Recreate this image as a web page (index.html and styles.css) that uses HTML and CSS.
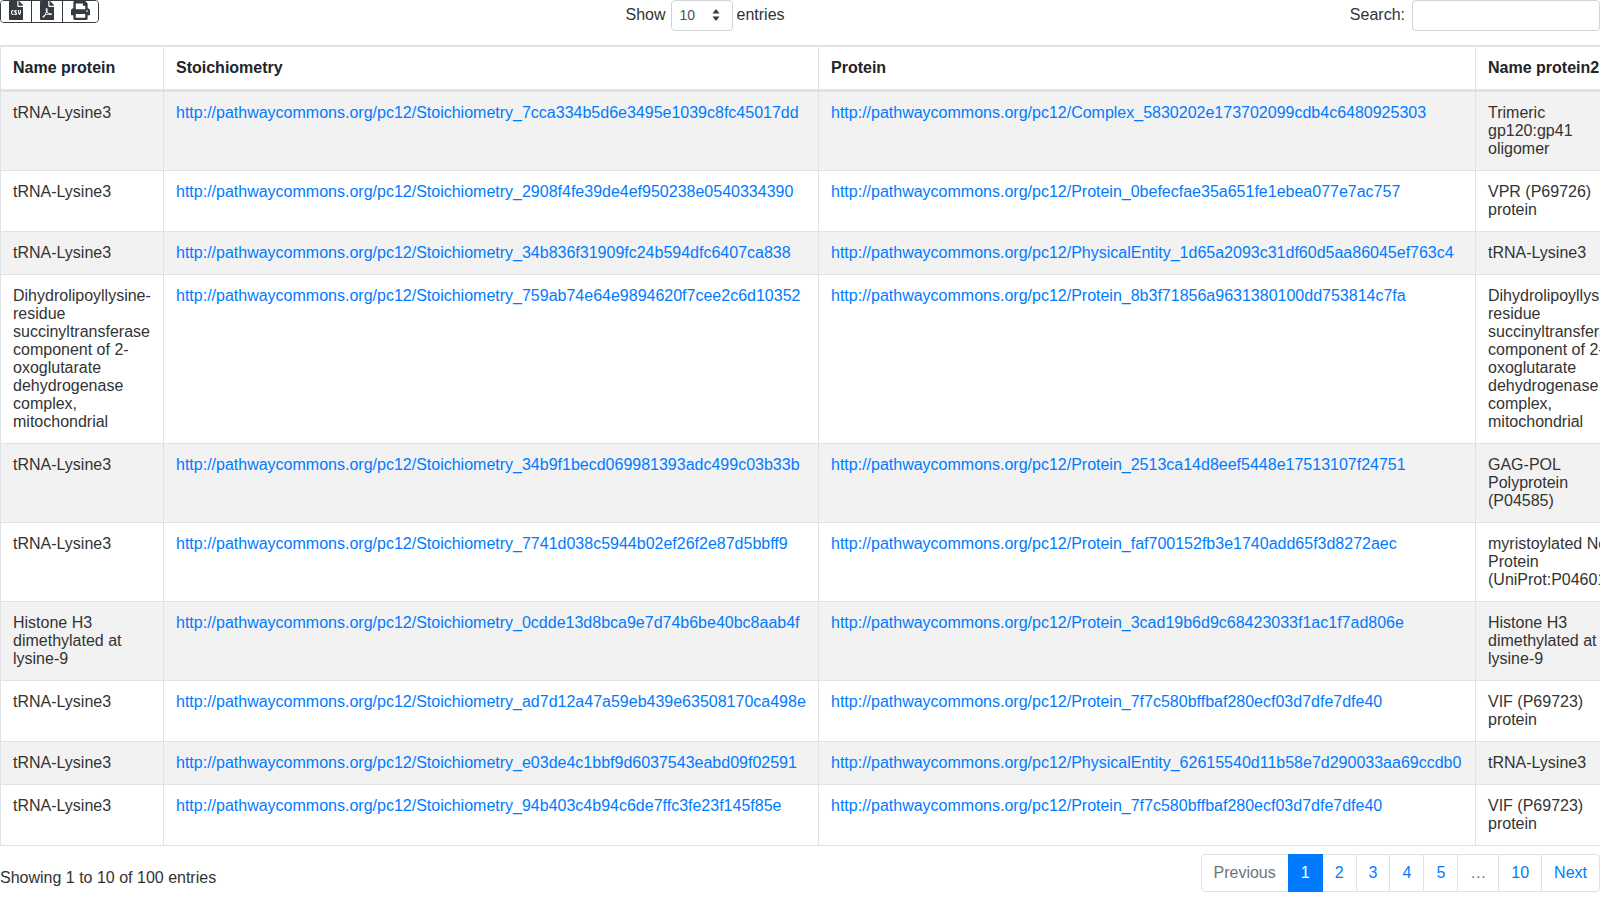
FILE: index.html
```html
<!DOCTYPE html>
<html lang="en">
<head>
<meta charset="utf-8">
<title>Stoichiometry</title>
<link rel="stylesheet" href="styles.css">
</head>
<body>
<div class="toolbar">
  <div class="buttons">
    <button class="btn" type="button" aria-label="CSV"><svg class="icon" viewBox="0 0 384 512"><path d="M224 136V0H24C10.700 0 0 10.700 0 24v464c0 13.300 10.700 24 24 24h336c13.300 0 24-10.700 24-24V160H248c-13.200 0-24-10.800-24-24zM384 121.900v6.100H256V0h6.100c6.400 0 12.500 2.500 17 7l97.900 98c4.500 4.500 7 10.600 7 16.900z"/><path class="cut" transform="matrix(1.35 0 0 1.45 -35 -119.500)" d="M102 250c-20 0-36 17-36 40v12c0 23 16 40 36 40h14v-22h-14c-8 0-14-8-14-18v-12c0-10 6-18 14-18h14v-22h-14zM158 250c-17 0-29 12-29 27 0 29 38 27 38 37 0 5-4 6-10 6h-25v22h25c19 0 33-12 33-28 0-29-38-27-38-38 0-3 3-4 7-4h21v-22h-22zM206 250v28c0 27 10 50 25 64h10c15-14 25-37 25-64v-28h-21v28c0 13-3 25-9 35-6-10-9-22-9-35v-28h-21z"/></svg></button>
    <button class="btn" type="button" aria-label="PDF"><svg class="icon" viewBox="0 0 384 512"><path d="M181.900 256.100c-5-16-4.900-46.900-2-46.900 8.400 0 7.600 36.900 2 46.900zm-1.700 47.200c-7.700 20.200-17.300 43.300-28.400 62.700 18.300-7 39-17.200 62.900-21.900-12.700-9.600-24.900-23.400-34.500-40.800zM86.100 428.100c0 .8 13.200-5.400 34.900-40.200-6.700 6.300-29.100 24.500-34.900 40.200zM248 160h136v328c0 13.300-10.700 24-24 24H24c-13.300 0-24-10.700-24-24V24C0 10.700 10.700 0 24 0h200v136c0 13.200 10.800 24 24 24zm-8 171.800c-20-12.200-33.300-29-42.700-53.800 4.500-18.500 11.600-46.600 6.200-64.200-4.700-29.400-42.400-26.500-47.800-6.800-5 18.300-.4 44.100 8.100 77-11.600 27.600-28.700 64.600-40.800 85.800-.1 0-.1.100-.2.100-27.100 13.900-73.600 44.500-54.500 68 5.600 6.900 16 10 21.500 10 17.900 0 35.700-18 61.100-61.800 25.800-8.500 54.100-19.100 79-23.200 21.700 11.800 47.100 19.500 64 19.500 29.200 0 31.200-32 19.700-43.400-13.900-13.600-54.300-9.700-73.600-7.200zM377 105L279 7c-4.500-4.500-10.600-7-17-7h-6v128h128v-6.100c0-6.300-2.500-12.400-7-16.900zm-74.100 255.300c4.100-2.700-2.500-11.900-42.800-9 37.100 15.800 42.800 9 42.800 9z"/></svg></button>
    <button class="btn" type="button" aria-label="Print"><svg class="icon icon-print" viewBox="0 0 512 512"><path d="M448 192V77.250c0-8.490-3.370-16.620-9.370-22.630L393.370 9.370c-6-6-14.140-9.370-22.630-9.370H96C78.330 0 64 14.330 64 32v160c-35.350 0-64 28.650-64 64v112c0 8.840 7.160 16 16 16h48v96c0 17.670 14.330 32 32 32h320c17.670 0 32-14.330 32-32v-96h48c8.840 0 16-7.160 16-16V256c0-35.350-28.650-64-64-64zm-64 256H128v-96h256v96zm0-224H128V64h192v48c0 8.840 7.160 16 16 16h48v96zm48 72c-13.250 0-24-10.750-24-24 0-13.260 10.750-24 24-24s24 10.740 24 24c0 13.250-10.750 24-24 24z"/></svg></button>
  </div>
  <label class="length"><span class="length-show">Show</span>
    <span class="select"><span>10</span><svg class="arrows" viewBox="0 0 8 12"><path d="M4 0 7.500 4.500H.5zM4 12 .5 7.500h7z"/></svg></span>
    entries</label>
  <label class="search">Search: <input class="search-input" type="search" aria-label="Search"></label>
</div>
<div class="table-wrap">
<table class="table">
  <colgroup><col class="c1"><col class="c2"><col class="c3"><col class="c4"></colgroup>
  <thead>
    <tr><th>Name protein</th><th>Stoichiometry</th><th>Protein</th><th>Name protein2</th></tr>
  </thead>
  <tbody>
    <tr class="odd"><td>tRNA-Lysine3</td><td><a href="#">http://pathwaycommons.org/pc12/Stoichiometry_7cca334b5d6e3495e1039c8fc45017dd</a></td><td><a href="#">http://pathwaycommons.org/pc12/Complex_5830202e173702099cdb4c6480925303</a></td><td>Trimeric gp120:gp41 oligomer</td></tr>
    <tr><td>tRNA-Lysine3</td><td><a href="#">http://pathwaycommons.org/pc12/Stoichiometry_2908f4fe39de4ef950238e0540334390</a></td><td><a href="#">http://pathwaycommons.org/pc12/Protein_0befecfae35a651fe1ebea077e7ac757</a></td><td>VPR (P69726) protein</td></tr>
    <tr class="odd"><td>tRNA-Lysine3</td><td><a href="#">http://pathwaycommons.org/pc12/Stoichiometry_34b836f31909fc24b594dfc6407ca838</a></td><td><a href="#">http://pathwaycommons.org/pc12/PhysicalEntity_1d65a2093c31df60d5aa86045ef763c4</a></td><td>tRNA-Lysine3</td></tr>
    <tr><td>Dihydrolipoyllysine-residue succinyltransferase component of 2-oxoglutarate dehydrogenase complex, mitochondrial</td><td><a href="#">http://pathwaycommons.org/pc12/Stoichiometry_759ab74e64e9894620f7cee2c6d10352</a></td><td><a href="#">http://pathwaycommons.org/pc12/Protein_8b3f71856a9631380100dd753814c7fa</a></td><td>Dihydrolipoyllysine-residue succinyltransferase component of 2-oxoglutarate dehydrogenase complex, mitochondrial</td></tr>
    <tr class="odd"><td>tRNA-Lysine3</td><td><a href="#">http://pathwaycommons.org/pc12/Stoichiometry_34b9f1becd069981393adc499c03b33b</a></td><td><a href="#">http://pathwaycommons.org/pc12/Protein_2513ca14d8eef5448e17513107f24751</a></td><td>GAG-POL Polyprotein (P04585)</td></tr>
    <tr><td>tRNA-Lysine3</td><td><a href="#">http://pathwaycommons.org/pc12/Stoichiometry_7741d038c5944b02ef26f2e87d5bbff9</a></td><td><a href="#">http://pathwaycommons.org/pc12/Protein_faf700152fb3e1740add65f3d8272aec</a></td><td>myristoylated Nef Protein (UniProt:P04601)</td></tr>
    <tr class="odd"><td>Histone H3 dimethylated at lysine-9</td><td><a href="#">http://pathwaycommons.org/pc12/Stoichiometry_0cdde13d8bca9e7d74b6be40bc8aab4f</a></td><td><a href="#">http://pathwaycommons.org/pc12/Protein_3cad19b6d9c68423033f1ac1f7ad806e</a></td><td>Histone H3 dimethylated at lysine-9</td></tr>
    <tr><td>tRNA-Lysine3</td><td><a href="#">http://pathwaycommons.org/pc12/Stoichiometry_ad7d12a47a59eb439e63508170ca498e</a></td><td><a href="#">http://pathwaycommons.org/pc12/Protein_7f7c580bffbaf280ecf03d7dfe7dfe40</a></td><td>VIF (P69723) protein</td></tr>
    <tr class="odd"><td>tRNA-Lysine3</td><td><a href="#">http://pathwaycommons.org/pc12/Stoichiometry_e03de4c1bbf9d6037543eabd09f02591</a></td><td><a href="#">http://pathwaycommons.org/pc12/PhysicalEntity_62615540d11b58e7d290033aa69ccdb0</a></td><td>tRNA-Lysine3</td></tr>
    <tr><td>tRNA-Lysine3</td><td><a href="#">http://pathwaycommons.org/pc12/Stoichiometry_94b403c4b94c6de7ffc3fe23f145f85e</a></td><td><a href="#">http://pathwaycommons.org/pc12/Protein_7f7c580bffbaf280ecf03d7dfe7dfe40</a></td><td>VIF (P69723) protein</td></tr>
  </tbody>
</table>
</div>
<div class="footer">
  <div class="info">Showing 1 to 10 of 100 entries</div>
  <ul class="pagination">
    <li class="page muted">Previous</li>
    <li class="page active">1</li>
    <li class="page">2</li>
    <li class="page">3</li>
    <li class="page">4</li>
    <li class="page">5</li>
    <li class="page muted">…</li>
    <li class="page">10</li>
    <li class="page">Next</li>
  </ul>
</div>
</body>
</html>
```
FILE: styles.css
```css
* { box-sizing: border-box; }
html, body { margin: 0; padding: 0; height: 900px; overflow: hidden; background: #fff; }
body { font-family: "Liberation Sans", Arial, sans-serif; font-size: 16px; line-height: 18px; color: #333; }
.toolbar { display: grid; grid-template-columns: 410px 590px 1fr; align-items: start; height: 45px; }
.buttons { display: flex; width: 99px; height: 23px; border: 1px solid #343a40; border-radius: 4px; overflow: hidden; }
.btn { flex: none; height: 21px; padding: 0; border: 0; border-right: 1px solid #343a40; background: #fff; display: flex; justify-content: center; align-items: flex-start; width: 31px; }
.btn:last-child { border-right: 0; width: 35px; }
.icon { display: block; flex: none; width: 14.25px; height: 19px; fill: #343a40; }
.icon-print { width: 19px; }
.cut { fill: #fff; }
.length { display: flex; justify-content: center; align-items: center; gap: 4px; height: 30px; }
.length-show { margin-right: 1px; }
.select { display: flex; align-items: center; justify-content: space-between; flex: none; width: 62px; height: 31px; padding: 0 12px 0 8px; border: 1px solid #ced4da; border-radius: 4px; color: #495057; font-size: 14px; }
.arrows { width: 8px; height: 12px; fill: #343a40; }
.search { display: flex; justify-content: flex-end; align-items: center; gap: 7px; height: 30px; }
.search-input { flex: none; width: 188px; height: 31px; border: 1px solid #ced4da; border-radius: 4px; padding: 0; background: #fff; }
.table-wrap { overflow: hidden; width: 1600px; }
.table { border-collapse: collapse; table-layout: fixed; width: 1638px; border: 1px solid #dee2e6; }
.c1 { width: 163px; } .c2 { width: 655px; } .c3 { width: 657px; } .c4 { width: 163px; }
th, td { padding: 12px; border: 1px solid #dee2e6; text-align: left; vertical-align: top; }
th { font-weight: 700; color: #212529; border-top-width: 2px; border-bottom-width: 3px; }
.odd td { background: #f2f2f2; }
a { color: #007bff; text-decoration: none; }
.footer { display: flex; justify-content: space-between; align-items: flex-start; padding-top: 8px; }
.info { padding-top: 15px; }
.pagination { display: flex; list-style: none; margin: 0; padding: 0; color: #007bff; }
.page { position: relative; height: 38px; margin-left: -1px; padding: 0 12px; line-height: 36px; border: 1px solid #dee2e6; background: #fff; }
.page:first-child { margin-left: 0; border-radius: 4px 0 0 4px; }
.page:last-child { border-radius: 0 4px 4px 0; }
.muted { color: #6c757d; }
.active { z-index: 1; background: #007bff; border-color: #007bff; color: #fff; }
```
